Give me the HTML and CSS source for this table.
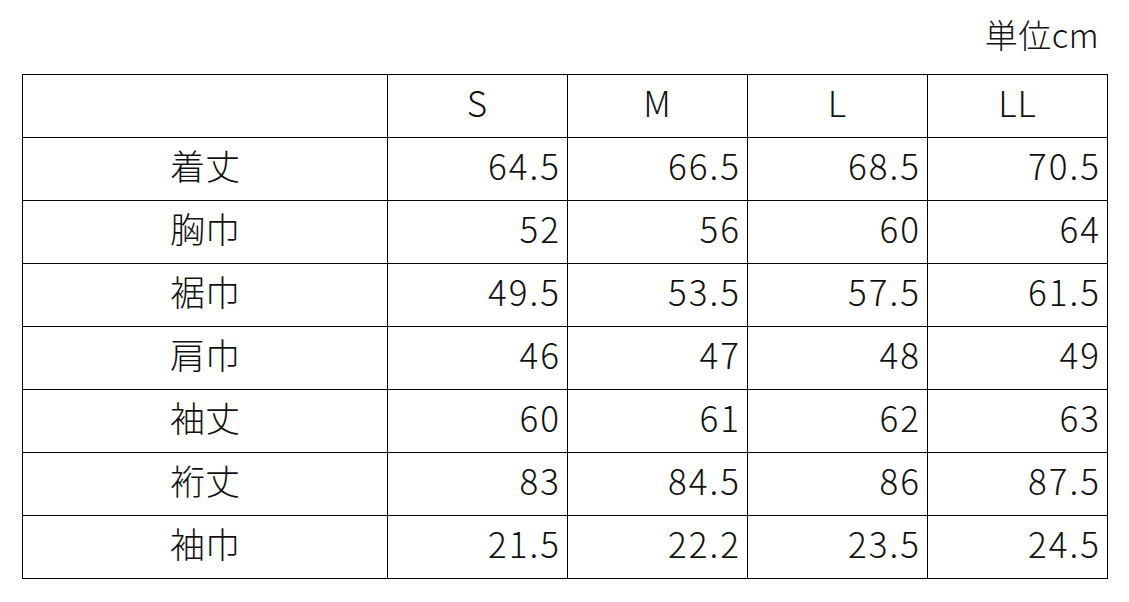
FILE: index.html
```html
<!DOCTYPE html>
<html lang="ja">
<head>
<meta charset="utf-8">
<link rel="stylesheet" href="styles.css">
</head>
<body>
<div class="page">
  <div class="unit">単位cm</div>
  <table class="size-table">
    <colgroup>
      <col class="c-label"><col class="c-size"><col class="c-size"><col class="c-size"><col class="c-size">
    </colgroup>
    <thead>
      <tr><th></th><th>S</th><th>M</th><th>L</th><th>LL</th></tr>
    </thead>
    <tbody>
      <tr><td class="label">着丈</td><td>64.5</td><td>66.5</td><td>68.5</td><td>70.5</td></tr>
      <tr><td class="label">胸巾</td><td>52</td><td>56</td><td>60</td><td>64</td></tr>
      <tr><td class="label">裾巾</td><td>49.5</td><td>53.5</td><td>57.5</td><td>61.5</td></tr>
      <tr><td class="label">肩巾</td><td>46</td><td>47</td><td>48</td><td>49</td></tr>
      <tr><td class="label">袖丈</td><td>60</td><td>61</td><td>62</td><td>63</td></tr>
      <tr><td class="label">裄丈</td><td>83</td><td>84.5</td><td>86</td><td>87.5</td></tr>
      <tr><td class="label">袖巾</td><td>21.5</td><td>22.2</td><td>23.5</td><td>24.5</td></tr>
    </tbody>
  </table>
</div>
</body>
</html>
```

FILE: styles.css
```css
html, body {
  margin: 0;
  padding: 0;
  background: #fff;
}
body {
  font-family: "Noto Sans CJK JP", "Noto Sans", sans-serif;
  color: #111;
}
.page {
  padding: 14px 0 0 22px;
  width: 1086px;
}
.unit {
  text-align: right;
  font-size: 33px;
  font-weight: 300;
  line-height: 40px;
  height: 60px;
  padding-right: 9px;
  letter-spacing: 0.5px;
}
.size-table {
  border-collapse: collapse;
  table-layout: fixed;
  width: 1086px;
}
.c-label { width: 365px; }
.c-size { width: 180px; }
.size-table th,
.size-table td {
  border: 1px solid #000;
  height: 52px;
  padding: 0 6px 10px 0;
  font-size: 35px;
  font-weight: 300;
  line-height: 1;
  text-align: right;
  vertical-align: middle;
  letter-spacing: 2px;
}
.size-table th {
  text-align: center;
  padding: 0 0 10px 0;
  letter-spacing: 1px;
}
.size-table td.label {
  text-align: center;
  padding: 0 0 10px 0;
  letter-spacing: 0;
}
```
